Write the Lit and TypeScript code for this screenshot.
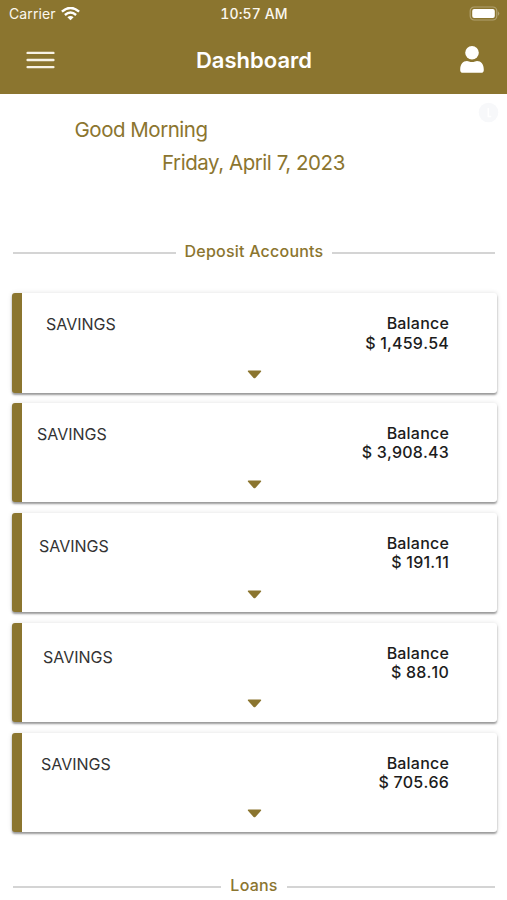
import { LitElement, html, css } from "lit";
import { customElement, property } from "lit/decorators.js";
import { styleMap } from "lit/directives/style-map.js";

interface Account {
  name: string;
  balance: string;
  indent: number;
  drop: number;
}

const ACCOUNTS: Account[] = [
  { name: "SAVINGS", balance: "$ 1,459.54", indent: 24, drop: 21 },
  { name: "SAVINGS", balance: "$ 3,908.43", indent: 15, drop: 21 },
  { name: "SAVINGS", balance: "$ 191.11", indent: 17, drop: 23 },
  { name: "SAVINGS", balance: "$ 88.10", indent: 21, drop: 24 },
  { name: "SAVINGS", balance: "$ 705.66", indent: 19, drop: 21.5 },
];

@customElement("section-title")
class SectionTitle extends LitElement {
  @property() label = "";

  static styles = css`
    :host {
      display: flex;
      align-items: center;
      gap: 9px;
      height: 20px;
      margin: 0 12px 0 13px;
      color: #8b752f;
      font-size: 16px;
      line-height: 20px;
      font-weight: 500;
      letter-spacing: 0.22px;
      white-space: nowrap;
    }
    .rule {
      flex: 1;
      height: 2px;
      margin-top: 3px;
      background: #d4d4d4;
    }
  `;

  render() {
    return html`<span class="rule"></span><span>${this.label}</span><span class="rule"></span>`;
  }
}

@customElement("account-card")
class AccountCard extends LitElement {
  @property({ attribute: false }) account!: Account;

  static styles = css`
    :host {
      display: block;
    }
    .card {
      box-sizing: border-box;
      height: 99.5px;
      display: grid;
      grid-template-columns: 1fr auto;
      grid-template-rows: 75px auto;
      border-left: 10px solid #8b752f;
      border-radius: 3px;
      background: #fff;
      box-shadow: 0 2px 2px rgba(0, 0, 0, 0.36), 0 0 5px rgba(0, 0, 0, 0.12);
    }
    .name {
      color: #333;
      font-size: 16px;
      line-height: 20px;
      letter-spacing: 0;
    }
    .balance {
      padding: 21px 48px 0 0;
      text-align: right;
      color: #1c1c1c;
      font-size: 16px;
      line-height: 19.5px;
      font-weight: 500;
      letter-spacing: 0.2px;
    }
    .amount {
      letter-spacing: 0.2px;
      font-kerning: none;
    }
    .arrow {
      grid-column: 1 / -1;
      display: block;
      justify-self: center;
      margin: 1.8px 10px 0 0;
    }
  `;

  render() {
    const a = this.account;
    return html`
      <div class="card">
        <div class="name" style=${styleMap({ paddingLeft: `${a.indent}px`, paddingTop: `${a.drop}px` })}>${a.name}</div>
        <div class="balance">
          <div>Balance</div>
          <div class="amount">${a.balance}</div>
        </div>
        <svg class="arrow" width="15" height="9" viewBox="0 0 15 9">
          <path d="M1.5.5h12q1.1.2.5 1.2L8.4 7.9q-.9.9-1.8 0L1 1.7Q.4.7 1.5.5Z" fill="#8b752f" />
        </svg>
      </div>
    `;
  }
}

@customElement("app-root")
class AppRoot extends LitElement {
  static styles = css`
    :host {
      display: block;
      height: 900px;
      overflow: hidden;
      background: #fff;
      font-family: Inter, "Liberation Sans", sans-serif;
    }
    .header {
      height: 94px;
      box-sizing: border-box;
      background: #8b752f;
      color: #fff;
    }
    .status,
    .nav {
      display: grid;
      grid-template-columns: 1fr auto 1fr;
      align-items: center;
    }
    .status {
      height: 27px;
      padding: 0 7px 0 9px;
      font-size: 14px;
      color: #fbf8ef;
    }
    .carrier {
      display: flex;
      align-items: center;
      gap: 5.5px;
    }
    .label {
      letter-spacing: 0.1px;
    }
    .time {
      margin-right: 1px;
      font-size: 14px;
      font-weight: 500;
      letter-spacing: 0.1px;
      font-variant-numeric: tabular-nums;
    }
    .battery,
    .user {
      justify-self: end;
      display: block;
    }
    .nav {
      height: 66px;
      padding: 0 22px 0 26px;
    }
    .title {
      margin-right: 3px;
      font-size: 22px;
      font-weight: 600;
      line-height: 28px;
    }
    .greeting {
      position: relative;
      height: 147px;
      color: #8b752f;
      font-size: 20.5px;
      line-height: 33px;
    }
    .hello {
      padding: 19px 0 0 74.5px;
      letter-spacing: -0.48px;
    }
    .date {
      padding-left: 162px;
      letter-spacing: -0.45px;
    }
    .badge {
      position: absolute;
      top: 8px;
      right: 8px;
    }
    .cards {
      display: flex;
      flex-direction: column;
      gap: 10.4px;
      padding: 32px 10px 43px 12px;
    }
  `;

  render() {
    return html`
      <header class="header">
        <div class="status">
          <div class="carrier">
            <span class="label">Carrier</span>
            <svg width="19" height="14" viewBox="0 0 19 14" fill="none" stroke="#fff" stroke-width="2.4">
              <path d="M.9 4.7Q9.5-2.9 18.1 4.7" />
              <path d="M3.9 8q5.6-4.8 11.2 0" />
              <path d="M9.5 13.3 6.4 10.3q3.1-2.4 6.2 0Z" fill="#fff" stroke="none" />
            </svg>
          </div>
          <span class="time">10:57 AM</span>
          <svg class="battery" width="31" height="15" viewBox="0 0 31 15">
            <rect x="1.2" y="1" width="26.6" height="13" rx="4" fill="none" stroke="#b1a271" stroke-width="1.2" />
            <rect x="3.2" y="3" width="22.6" height="9" rx="2" fill="#fff" />
            <path d="M29 5.2q2.6 2.3 0 4.6Z" fill="#b1a271" />
          </svg>
        </div>
        <div class="nav">
          <svg width="29" height="18" viewBox="0 0 29 18" stroke="#f8f3e6" stroke-width="2.4" stroke-linecap="round">
            <path d="M1.6 1.9h25.8M1.6 9h25.8M1.6 16.1h25.8" />
          </svg>
          <span class="title">Dashboard</span>
          <svg class="user" width="26" height="28" viewBox="0 0 26 28" fill="#fff">
            <circle cx="13" cy="6.8" r="6.8" />
            <path d="M1.2 23.9C1.2 17.8 4 15 8 15q1.1 0 2 .4 3 1.1 6 0 .9-.4 2-.4c4 0 6.8 2.8 6.8 8.9q0 2.8-2.6 2.8H3.8q-2.6 0-2.6-2.8Z" />
          </svg>
        </div>
      </header>
      <section class="greeting">
        <div class="hello">Good Morning</div>
        <div class="date">Friday, April 7, 2023</div>
        <svg class="badge" width="21" height="21" viewBox="0 0 21 21">
          <circle cx="10.5" cy="10.5" r="9.8" fill="#f7f8fa" />
          <path d="M10.3 6v8.5h3" fill="none" stroke="#fff" stroke-width="1.5" />
        </svg>
      </section>
      <section-title label="Deposit Accounts"></section-title>
      <main class="cards">${ACCOUNTS.map((a) => html`<account-card .account=${a}></account-card>`)}</main>
      <section-title label="Loans"></section-title>
    `;
  }
}
